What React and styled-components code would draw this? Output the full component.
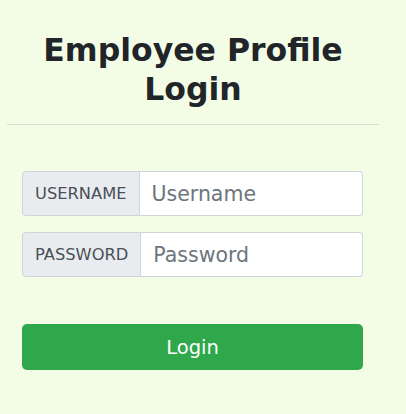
import React from "react"
import styled, { createGlobalStyle } from "styled-components"

const GlobalStyle = createGlobalStyle`
  html, body {
    margin: 0;
    padding: 0;
    background-color: #f3fde6;
    font-family: "DejaVu Sans", Verdana, sans-serif;
  }
`;

const Wrapper = styled.div`
  width: 372px;
  margin-left: 7px;
  padding-top: 31px;
`;

const Title = styled.h1`
  margin: 0;
  font-size: 31.5px;
  line-height: 38.5px;
  font-weight: bold;
  color: #212529;
  text-align: center;
`;

const Divider = styled.hr`
  margin: 16px 0 0;
  border: none;
  border-top: 1px solid #d8ded0;
`;

const FormContainer = styled.form`
  display: flex;
  flex-direction: column;
  padding: 46px 16px 0 15px;
`;

const InputGroup = styled.div`
  display: flex;
  height: 45px;
  margin-bottom: 16px;
`;

const Label = styled.label`
  display: flex;
  align-items: center;
  padding: 0 12px;
  background-color: #e9ecef;
  border: 1px solid #ced4da;
  border-radius: 4px 0 0 4px;
  color: #495057;
  font-size: 16.3px;
  white-space: nowrap;
`;

const Input = styled.input`
  flex: 1;
  min-width: 0;
  padding: 0 12px;
  border: 1px solid #ced4da;
  border-left: none;
  border-radius: 0 4px 4px 0;
  background-color: #fff;
  font-family: "DejaVu Sans", Verdana, sans-serif;
  font-size: 20.5px;
  color: #495057;
  outline: none;

  &::placeholder {
    color: #6c757d;
  }
`;

const Button = styled.button`
  margin-top: 31px;
  height: 46px;
  border: none;
  border-radius: 5px;
  background-color: #2fa84b;
  color: #fff;
  font-family: "DejaVu Sans", Verdana, sans-serif;
  font-size: 19.5px;
  cursor: pointer;
`;

export default function App() {
  return (
    <>
      <GlobalStyle />
      <Wrapper>
        <Title>
          Employee Profile
          <br />
          Login
        </Title>
        <Divider />
        <FormContainer onSubmit={(e) => e.preventDefault()}>
          <InputGroup>
            <Label htmlFor="username">USERNAME</Label>
            <Input id="username" name="username" placeholder="Username" />
          </InputGroup>
          <InputGroup>
            <Label htmlFor="password">PASSWORD</Label>
            <Input id="password" name="password" type="password" placeholder="Password" />
          </InputGroup>
          <Button type="submit">Login</Button>
        </FormContainer>
      </Wrapper>
    </>
  )
}
